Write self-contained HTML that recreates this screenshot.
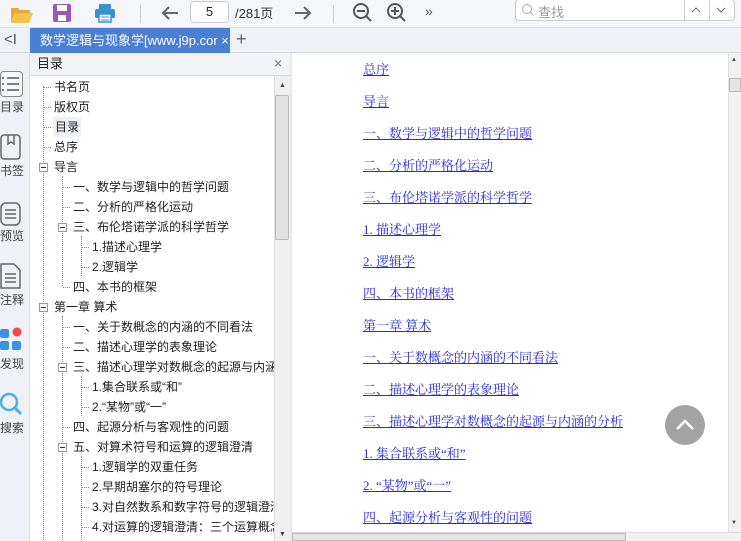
<!DOCTYPE html>
<html><head><meta charset="utf-8"><style>
*{margin:0;padding:0;box-sizing:border-box}
body{width:741px;height:541px;overflow:hidden;background:#fff;font-family:"Liberation Sans","Noto Sans CJK SC",sans-serif;font-size:12px;color:#222;position:relative}
.a{position:absolute}
.tb{left:0;top:0;width:741px;height:28px;background:#f4f6f9;border-bottom:1px solid #dde1e6}
.tabs{left:0;top:28px;width:741px;height:25px;background:#eef1f5;border-bottom:1px solid #d6dbe2}
.tab{left:30px;top:28px;width:200px;height:25px;background:#4a7fd4;color:#fff;font-size:13px;line-height:25px;padding-left:10px;white-space:nowrap;overflow:hidden}
.side{left:0;top:53px;width:30px;height:488px;background:#eef1f5;border-right:1px solid #d6dbe2}
.sl{left:0;width:30px;text-align:center;font-size:12px;color:#444}
.ph{left:30px;top:53px;width:260px;height:23px;background:#f1f3f6;border-bottom:1px solid #d6dbe2;font-size:13px;line-height:22px;padding-left:7px}
.tree{left:30px;top:76px;width:244px;height:465px;background:#fff;overflow:hidden}
.r{position:absolute;white-space:nowrap;font-size:12px;line-height:20px;height:20px}
.vl{position:absolute;width:0;border-left:1px dotted #888}
.hl{position:absolute;height:0;border-top:1px dotted #888;width:7px}
.bx{position:absolute;width:9px;height:9px;border:1px solid #999;background:#fff}
.bx:after{content:"";position:absolute;left:1px;top:3px;width:5px;height:1px;background:#333}
.lk{position:absolute;left:363px;font-family:"Liberation Serif","Noto Serif CJK SC",serif;font-size:13px;color:#2b2bd0;text-decoration:underline;white-space:nowrap}
</style></head><body>
<div class="a tb"></div>
<svg class="a" style="left:10px;top:4px" width="24" height="20"><path d="M1 4h7l2 2h10v3H5L1 18z" fill="#e8a83a"/><path d="M5 9h18l-4 10H1z" fill="#f4c24f"/></svg>
<svg class="a" style="left:52px;top:3px" width="20" height="20"><rect x="1" y="1" width="18" height="18" rx="2" fill="#9b59b6"/><rect x="5" y="2" width="10" height="6" fill="#fff"/><rect x="6" y="12" width="8" height="6" fill="#fff"/></svg>
<svg class="a" style="left:94px;top:3px" width="22" height="20"><rect x="5" y="1" width="12" height="5" fill="#3a8fd0"/><rect x="1" y="6" width="20" height="9" rx="2" fill="#3a8fd0"/><rect x="5" y="11" width="12" height="8" fill="#fff" stroke="#3a8fd0" stroke-width="1.5"/><line x1="7" y1="14" x2="15" y2="14" stroke="#3a8fd0"/><line x1="7" y1="17" x2="15" y2="17" stroke="#3a8fd0"/></svg>
<div class="a" style="left:140px;top:5px;width:1px;height:18px;background:#ccc"></div>
<svg class="a" style="left:160px;top:3px" width="20" height="20"><path d="M18 10H3M9 4L3 10l6 6" stroke="#666" stroke-width="2" fill="none"/></svg>
<div class="a" style="left:190px;top:1px;width:39px;height:22px;border:1px solid #c8cdd3;border-radius:4px;background:#fff;text-align:center;line-height:20px;font-size:13px">5</div>
<div class="a" style="left:235px;top:3px;font-size:13px;color:#333">/281页</div>
<svg class="a" style="left:293px;top:3px" width="20" height="20"><path d="M2 10h15M11 4l6 6-6 6" stroke="#666" stroke-width="2" fill="none"/></svg>
<div class="a" style="left:333px;top:5px;width:1px;height:18px;background:#ccc"></div>
<svg class="a" style="left:352px;top:2px" width="22" height="22"><circle cx="9" cy="9" r="7" stroke="#555" stroke-width="2" fill="none"/><path d="M5 9h8M14 14l5 5" stroke="#555" stroke-width="2"/></svg>
<svg class="a" style="left:386px;top:2px" width="22" height="22"><circle cx="9" cy="9" r="7" stroke="#555" stroke-width="2" fill="none"/><path d="M5 9h8M9 5v8M14 14l5 5" stroke="#555" stroke-width="2"/></svg>
<div class="a" style="left:425px;top:3px;font-size:14px;color:#555">»</div>
<div class="a" style="left:515px;top:-1px;width:220px;height:22px;border:1px solid #c8cdd3;border-radius:4px;background:#fff"></div>
<svg class="a" style="left:521px;top:3px" width="14" height="14"><circle cx="6" cy="6" r="4.5" stroke="#aaa" fill="none"/><path d="M9.5 9.5l3 3" stroke="#aaa"/></svg>
<div class="a" style="left:538px;top:2px;font-size:13px;color:#999">查找</div>
<div class="a" style="left:684px;top:0;width:1px;height:21px;background:#ccc"></div>
<div class="a" style="left:709px;top:0;width:1px;height:21px;background:#ccc"></div>
<svg class="a" style="left:691px;top:6px" width="10" height="8"><path d="M1 6l4-4 4 4" stroke="#666" fill="none"/></svg>
<svg class="a" style="left:716px;top:6px" width="10" height="8"><path d="M1 2l4 4 4-4" stroke="#666" fill="none"/></svg>

<div class="a tabs"></div>
<div class="a" style="left:4px;top:31px;font-size:15px;color:#555">&lt;I</div>
<div class="a tab">数学逻辑与现象学[www.j9p.cor ×</div>
<div class="a" style="left:236px;top:29px;font-size:18px;color:#666">+</div>

<div class="a side"></div>
<div class="a" style="left:0;top:71px;width:23px;height:26px;border:1px solid #888;border-radius:4px;background:#f6f7f9"></div>
<svg class="a" style="left:0;top:74px" width="22" height="20"><g stroke="#555" stroke-width="1.5"><path d="M2 4h2M7 4h12M2 10h2M7 10h12M2 16h2M7 16h12"/></g></svg>
<div class="a sl" style="top:98px;text-align:left;left:0">目录</div>
<svg class="a" style="left:0;top:134px" width="22" height="26"><rect x="1" y="1" width="19" height="24" rx="3" stroke="#666" fill="none" stroke-width="1.5"/><path d="M8 1v9l3-2 3 2V1" stroke="#666" fill="none" stroke-width="1.5"/></svg>
<div class="a sl" style="top:162px;text-align:left">书签</div>
<svg class="a" style="left:0;top:200px" width="22" height="26"><rect x="1" y="3" width="19" height="22" rx="5" stroke="#666" fill="none" stroke-width="1.5"/><path d="M5 10h11M5 14h11M5 18h11" stroke="#666" stroke-width="1.5"/></svg>
<div class="a sl" style="top:227px;text-align:left">预览</div>
<svg class="a" style="left:0;top:262px" width="22" height="28"><path d="M1 2h13l6 6v18H1z" stroke="#666" fill="none" stroke-width="1.5"/><path d="M5 12h11M5 16h11M5 20h11" stroke="#666" stroke-width="1.5"/></svg>
<div class="a sl" style="top:291px;text-align:left">注释</div>
<svg class="a" style="left:0;top:326px" width="24" height="26"><rect x="0" y="3" width="9" height="9" rx="2" fill="#3d8fe0"/><circle cx="17" cy="6" r="4.5" fill="#f04848"/><rect x="0" y="15" width="9" height="9" rx="2" fill="#3d8fe0"/><rect x="12" y="15" width="9" height="9" rx="2" fill="#3d8fe0"/></svg>
<div class="a sl" style="top:355px;text-align:left">发现</div>
<svg class="a" style="left:0;top:392px" width="24" height="26"><circle cx="9" cy="10" r="8" stroke="#4aaee8" stroke-width="2.5" fill="none"/><path d="M15 16l6 6" stroke="#4aaee8" stroke-width="3"/></svg>
<div class="a sl" style="top:419px;text-align:left">搜索</div>

<div class="a ph">目录</div>
<div class="a" style="left:274px;top:55px;font-size:14px;color:#777">×</div>
<div class="a tree">
<div class="vl" style="left:13px;top:10px;height:220px"></div>
<div class="vl" style="left:13px;top:230px;height:240px"></div>
<div class="vl" style="left:32px;top:100px;height:110px"></div>
<div class="vl" style="left:51px;top:160px;height:40px"></div>
<div class="vl" style="left:32px;top:240px;height:230px"></div>
<div class="vl" style="left:51px;top:300px;height:40px"></div>
<div class="vl" style="left:51px;top:380px;height:90px"></div>
</div>
<div class="a" style="left:30px;top:77px;width:244px;height:464px;overflow:hidden">
<div class="hl" style="left:14px;top:10px"></div><div class="r" style="left:24px;top:0">书名页</div>
<div class="hl" style="left:14px;top:30px"></div><div class="r" style="left:24px;top:20px">版权页</div>
<div class="hl" style="left:14px;top:50px"></div><div class="r" style="left:23px;top:40px;background:#eef1f5;padding:0 2px">目录</div>
<div class="hl" style="left:14px;top:70px"></div><div class="r" style="left:24px;top:60px">总序</div>
<div class="bx" style="left:9px;top:86px"></div><div class="r" style="left:24px;top:80px">导言</div>
<div class="hl" style="left:33px;top:110px"></div><div class="r" style="left:43px;top:100px">一、数学与逻辑中的哲学问题</div>
<div class="hl" style="left:33px;top:130px"></div><div class="r" style="left:43px;top:120px">二、分析的严格化运动</div>
<div class="bx" style="left:28px;top:146px"></div><div class="r" style="left:43px;top:140px">三、布伦塔诺学派的科学哲学</div>
<div class="hl" style="left:52px;top:170px"></div><div class="r" style="left:62px;top:160px">1.描述心理学</div>
<div class="hl" style="left:52px;top:190px"></div><div class="r" style="left:62px;top:180px">2.逻辑学</div>
<div class="hl" style="left:33px;top:210px"></div><div class="r" style="left:43px;top:200px">四、本书的框架</div>
<div class="bx" style="left:9px;top:226px"></div><div class="r" style="left:24px;top:220px">第一章 算术</div>
<div class="hl" style="left:33px;top:250px"></div><div class="r" style="left:43px;top:240px">一、关于数概念的内涵的不同看法</div>
<div class="hl" style="left:33px;top:270px"></div><div class="r" style="left:43px;top:260px">二、描述心理学的表象理论</div>
<div class="bx" style="left:28px;top:286px"></div><div class="r" style="left:43px;top:280px">三、描述心理学对数概念的起源与内涵的分析</div>
<div class="hl" style="left:52px;top:310px"></div><div class="r" style="left:62px;top:300px">1.集合联系或“和”</div>
<div class="hl" style="left:52px;top:330px"></div><div class="r" style="left:62px;top:320px">2.“某物”或“一”</div>
<div class="hl" style="left:33px;top:350px"></div><div class="r" style="left:43px;top:340px">四、起源分析与客观性的问题</div>
<div class="bx" style="left:28px;top:366px"></div><div class="r" style="left:43px;top:360px">五、对算术符号和运算的逻辑澄清</div>
<div class="hl" style="left:52px;top:390px"></div><div class="r" style="left:62px;top:380px">1.逻辑学的双重任务</div>
<div class="hl" style="left:52px;top:410px"></div><div class="r" style="left:62px;top:400px">2.早期胡塞尔的符号理论</div>
<div class="hl" style="left:52px;top:430px"></div><div class="r" style="left:62px;top:420px">3.对自然数系和数字符号的逻辑澄清</div>
<div class="hl" style="left:52px;top:450px"></div><div class="r" style="left:62px;top:440px">4.对运算的逻辑澄清：三个运算概念</div>
</div>
<div class="a" style="left:274px;top:76px;width:16px;height:465px;background:#f0f0f0;border-left:1px solid #ddd"></div>
<div class="a" style="left:279px;top:82px;font-size:7px;color:#444">▲</div>
<div class="a" style="left:275px;top:95px;width:14px;height:145px;background:#e2e2e2;border:1px solid #bbb;border-radius:2px"></div>
<div class="a" style="left:279px;top:531px;font-size:7px;color:#444">▼</div>
<div class="a" style="left:290px;top:53px;width:2px;height:488px;background:#e6e9ee"></div>

<a class="lk" style="top:59px">总序</a>
<a class="lk" style="top:91px">导言</a>
<a class="lk" style="top:123px">一、数学与逻辑中的哲学问题</a>
<a class="lk" style="top:155px">二、分析的严格化运动</a>
<a class="lk" style="top:187px">三、布伦塔诺学派的科学哲学</a>
<a class="lk" style="top:219px">1. 描述心理学</a>
<a class="lk" style="top:251px">2. 逻辑学</a>
<a class="lk" style="top:283px">四、本书的框架</a>
<a class="lk" style="top:315px">第一章 算术</a>
<a class="lk" style="top:347px">一、关于数概念的内涵的不同看法</a>
<a class="lk" style="top:379px">二、描述心理学的表象理论</a>
<a class="lk" style="top:411px">三、描述心理学对数概念的起源与内涵的分析</a>
<a class="lk" style="top:443px">1. 集合联系或“和”</a>
<a class="lk" style="top:475px">2. “某物”或“一”</a>
<a class="lk" style="top:507px">四、起源分析与客观性的问题</a>
<div class="a" style="left:665px;top:405px;width:40px;height:40px;border-radius:50%;background:#a3a3a3"></div>
<svg class="a" style="left:665px;top:405px" width="40" height="40"><path d="M12 24l8-8 8 8" stroke="#fff" stroke-width="2.5" fill="none"/></svg>
<div class="a" style="left:728px;top:53px;width:13px;height:480px;background:#f2f2f2;border-left:1px solid #e0e0e0"></div>
<div class="a" style="left:731px;top:57px;font-size:6px;color:#444">▲</div>
<div class="a" style="left:729px;top:78px;width:12px;height:14px;background:#e4e4e4;border:1px solid #bbb"></div>
<div class="a" style="left:731px;top:520px;font-size:6px;color:#444">▼</div>
<div class="a" style="left:292px;top:532px;width:449px;height:9px;background:#f2f2f2;border-top:1px solid #ddd"></div>
<div class="a" style="left:292px;top:533px;width:334px;height:8px;background:#e4e4e4;border:1px solid #bbb"></div>
</body></html>
